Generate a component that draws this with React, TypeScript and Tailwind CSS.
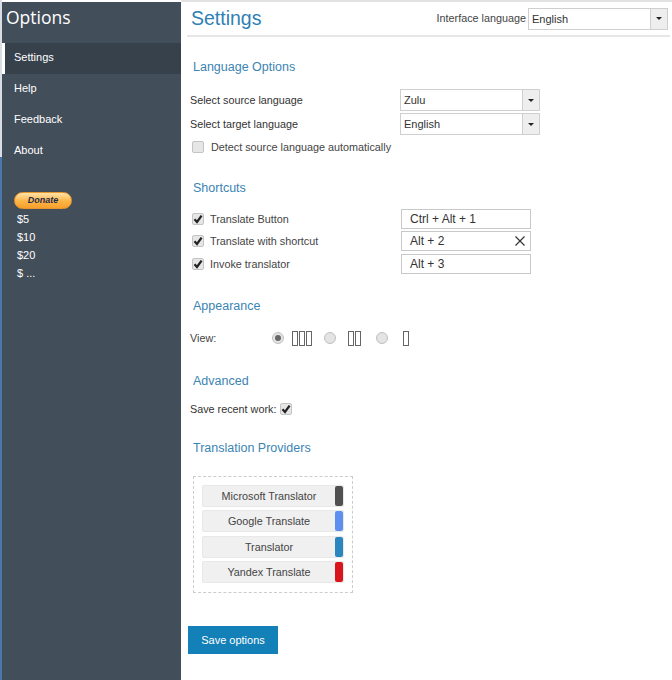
import React from "react";

const SANS = "font-['Arial','Liberation_Sans',sans-serif]";

function Heading({ children, className = "" }: { children: React.ReactNode; className?: string }) {
  return <h2 className={`text-[12.5px] leading-[18px] text-[#3b84b3] ml-[6px] ${className}`}>{children}</h2>;
}

function Check({ checked = false }: { checked?: boolean }) {
  return (
    <span className="w-[12px] h-[12px] shrink-0 rounded-[2px] border border-[#c4c4c4] bg-[#e6e6e6] flex items-center justify-center">
      {checked && (
        <svg width="10" height="10" viewBox="0 0 10 10">
          <path d="M1.5 5.2 L4 8 L8.6 1.6" fill="none" stroke="#222" strokeWidth="2.2" />
        </svg>
      )}
    </span>
  );
}

function Select({ value, className = "" }: { value: string; className?: string }) {
  return (
    <div className={`flex h-[22px] border border-[#cfcfcf] bg-white ${className}`}>
      <span className="flex-1 pl-[3px] text-[11px] leading-[20px] text-[#333]">{value}</span>
      <span className="w-[17px] bg-[#eeeeee] border-l border-[#cfcfcf] flex items-center justify-center">
        <span className="w-0 h-0 border-x-[3px] border-x-transparent border-t-[3px] border-t-[#222]" />
      </span>
    </div>
  );
}

function Shortcut({ label, keys, clear = false }: { label: string; keys: string; clear?: boolean }) {
  return (
    <div className="flex items-center h-[20px] pl-[5px]">
      <Check checked />
      <span className="ml-[6px] w-[191px] text-[10.8px] text-[#444]">{label}</span>
      <div className="w-[130px] h-[20px] border border-[#c8c8c8] flex items-center justify-between pl-[8px] pr-[4px] text-[12px] text-[#333]">
        <span>{keys}</span>
        {clear && (
          <svg width="10" height="10" viewBox="0 0 10 10" className="mr-px">
            <path d="M0.5 0.5 L9.5 9.5 M9.5 0.5 L0.5 9.5" stroke="#333" strokeWidth="1.2" />
          </svg>
        )}
      </div>
    </div>
  );
}

function Radio({ checked = false }: { checked?: boolean }) {
  return (
    <span className="w-[12px] h-[12px] rounded-full border border-[#c0c0c0] bg-[#e4e4e4] flex items-center justify-center shrink-0">
      {checked && <span className="w-[6px] h-[6px] rounded-full bg-[#666]" />}
    </span>
  );
}

function Columns({ count }: { count: number }) {
  return (
    <span className="flex gap-px">
      {Array.from({ length: count }).map((_, i) => (
        <span key={i} className="w-[6px] h-[15px] border border-[#666]" />
      ))}
    </span>
  );
}

function Provider({ name, color }: { name: string; color: string }) {
  return (
    <div className="flex w-[142px] h-[22px] rounded-[2px] bg-[#f0f0f0] border border-[#e8e8e8] overflow-hidden">
      <span className="flex-1 text-center text-[10.8px] leading-[20px] text-[#444]">{name}</span>
      <span className="w-[8px] rounded-[2px]" style={{ backgroundColor: color }} />
    </div>
  );
}

export default function App() {
  return (
    <div className={`${SANS} relative w-[672px] h-[680px] flex overflow-hidden bg-white`}>
      <div className="w-[2px] flex flex-col">
        <div className="h-[157px] bg-[#d8dde6]" />
        <div className="flex-1 bg-[#4a78ac]" />
      </div>
      <aside className="w-[179px] mt-[2px] bg-[#434e5b] text-white">
        <div className="text-[17.5px] leading-[28px] pl-[4px] pt-px font-['Open_Sans',sans-serif] h-[41px]">Options</div>
        <nav className="text-[11px]">
          <div className="h-[31px] flex items-center bg-[#37414c] border-l-[3px] border-white pl-[9px] pb-[2px]">Settings</div>
          <div className="h-[31px] flex items-center pl-[12px] pb-[2px]">Help</div>
          <div className="h-[31px] flex items-center pl-[12px] pb-[2px]">Feedback</div>
          <div className="h-[31px] flex items-center pl-[12px] pb-[2px]">About</div>
        </nav>
        <div className="mt-[25px] ml-[12px] w-[58px] h-[17px] rounded-full border border-[#e8962e] bg-gradient-to-b from-[#ffe3a8] via-[#fdb848] to-[#f79f2c] text-center text-[9px] leading-[15px] font-bold italic text-[#1d2b50]">
          Donate
        </div>
        <div className="ml-[15px] mt-px text-[11px] leading-[18px]">
          <div>$5</div>
          <div>$10</div>
          <div>$20</div>
          <div>$ ...</div>
        </div>
      </aside>
      <main className="flex-1 border-t-2 border-[#e2e2e2] pl-[6px] pr-[2px]">
        <header className="flex items-center justify-between h-[35px] border-b-2 border-[#e6e6e6]">
          <h1 className="text-[19.5px] pl-[4px] text-[#2f7fb5] font-normal">Settings</h1>
          <div className="flex items-center gap-[2px] mr-[2px]">
            <span className="text-[10.8px] text-[#444]">Interface language</span>
            <Select value="English" className="w-[140px]" />
          </div>
        </header>

        <Heading className="mt-[21px]">Language Options</Heading>
        <div className="mt-[13px] flex flex-col gap-[2px] text-[10.8px] text-[#333]">
          <div className="flex items-center h-[22px]">
            <span className="w-[213px] pl-[3px]">Select source language</span>
            <Select value="Zulu" className="w-[140px]" />
          </div>
          <div className="flex items-center h-[22px]">
            <span className="w-[213px] pl-[3px]">Select target language</span>
            <Select value="English" className="w-[140px]" />
          </div>
        </div>
        <div className="flex items-center h-[18px] mt-[3px] pl-[5px] text-[10.8px] text-[#444]">
          <Check />
          <span className="ml-[7px]">Detect source language automatically</span>
        </div>

        <Heading className="mt-[23px]">Shortcuts</Heading>
        <div className="mt-[12px] flex flex-col gap-[2px]">
          <Shortcut label="Translate Button" keys="Ctrl + Alt + 1" />
          <Shortcut label="Translate with shortcut" keys="Alt + 2" clear />
          <div className="h-[20px] mt-px">
            <Shortcut label="Invoke translator" keys="Alt + 3" />
          </div>
        </div>

        <Heading className="mt-[23px]">Appearance</Heading>
        <div className="mt-[13px] h-[20px] flex items-center pl-[3px] text-[10.8px] text-[#444]">
          <span className="w-[82px]">View:</span>
          <Radio checked />
          <span className="ml-[8px]"><Columns count={3} /></span>
          <span className="ml-[12px]"><Radio /></span>
          <span className="ml-[12px]"><Columns count={2} /></span>
          <span className="ml-[15px]"><Radio /></span>
          <span className="ml-[15px]"><Columns count={1} /></span>
        </div>

        <Heading className="mt-[24px]">Advanced</Heading>
        <div className="mt-[10px] h-[18px] flex items-center gap-[4px] pl-[3px] text-[10.8px] text-[#333]">
          <span>Save recent work:</span>
          <Check checked />
        </div>

        <Heading className="mt-[21px]">Translation Providers</Heading>
        <div className="mt-[19px] ml-[6px] w-[160px] h-[117px] border border-dashed border-[#cccccc] pt-[8px] pl-[8px] flex flex-col gap-[3.4px]">
          <Provider name="Microsoft Translator" color="#505050" />
          <Provider name="Google Translate" color="#5e8ef0" />
          <Provider name="Translator" color="#2a86bd" />
          <Provider name="Yandex Translate" color="#d9141a" />
        </div>
        <button className="mt-[33px] ml-px w-[90px] h-[28px] bg-[#1480b8] text-white text-[11px]">Save options</button>
      </main>
    </div>
  );
}
